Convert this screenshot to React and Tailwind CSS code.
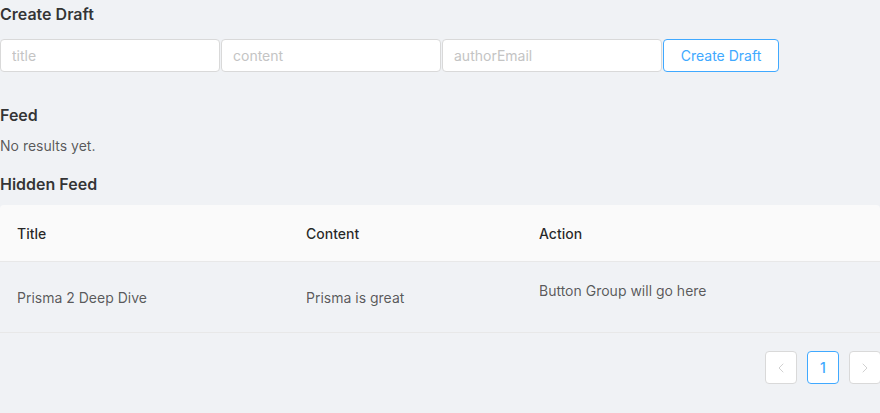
import { ChevronLeft, ChevronRight } from 'lucide-react';

export default function App() {
  return (
    <div className="min-h-[413px] w-[880px] overflow-hidden bg-[#f0f2f5] font-['Inter',sans-serif] text-[14px] text-[rgba(0,0,0,0.65)]">
      {/* Create Draft */}
      <h2 className="pt-[2px] text-[16px] font-semibold leading-[24px] text-[rgba(0,0,0,0.8)]">Create Draft</h2>
      <div className="mt-[13px] flex">
        {['title', 'content', 'authorEmail'].map((p) => (
          <input
            key={p}
            placeholder={p}
            className="mr-px h-[33px] w-[220px] rounded-[4px] border border-[#d9d9d9] bg-white px-[11px] text-[14px] placeholder:text-[#c4c4c4] focus:outline-none"
          />
        ))}
        <button className="h-[33px] w-[116px] rounded-[4px] border border-[#40a9ff] bg-white text-[14px] text-[#40a9ff]">
          Create Draft
        </button>
      </div>

      {/* Feed */}
      <h2 className="mt-[31px] text-[16px] font-semibold leading-[24px] text-[rgba(0,0,0,0.8)]">Feed</h2>
      <p className="mt-[8px] leading-[22px]">No results yet.</p>

      <h2 className="mt-[15px] text-[16px] font-semibold leading-[24px] text-[rgba(0,0,0,0.8)]">Hidden Feed</h2>

      {/* Table */}
      <div className="mt-[9px]">
        <div className="grid h-[57px] grid-cols-[289px_233px_1fr] items-center rounded-t-[4px] border-b border-[#e8e8e8] bg-[#fafafa] px-[17px] font-medium text-[rgba(0,0,0,0.85)]">
          <div>Title</div>
          <div>Content</div>
          <div>Action</div>
        </div>
        <div className="grid h-[71px] grid-cols-[289px_233px_1fr] border-b border-[#e8e8e8] px-[17px]">
          <div className="pt-[25px]">Prisma 2 Deep Dive</div>
          <div className="pt-[25px]">Prisma is great</div>
          <div className="pt-[18px]">Button Group will go here</div>
        </div>
      </div>

      {/* Pagination */}
      <div className="mt-[18px] flex justify-end gap-[10px]">
        <button className="flex h-[33px] w-[32px] items-center justify-center rounded-[4px] border border-[#d9d9d9] bg-white text-[#c8c8c8]">
          <ChevronLeft size={16} strokeWidth={1.25} />
        </button>
        <button className="flex h-[33px] w-[32px] items-center justify-center rounded-[4px] border border-[#40a9ff] bg-white font-medium text-[#40a9ff]">
          1
        </button>
        <button className="-mr-px flex h-[33px] w-[32px] items-center justify-center rounded-[4px] border border-[#d9d9d9] bg-white text-[#c8c8c8]">
          <ChevronRight size={16} strokeWidth={1.25} />
        </button>
      </div>
    </div>
  );
}
